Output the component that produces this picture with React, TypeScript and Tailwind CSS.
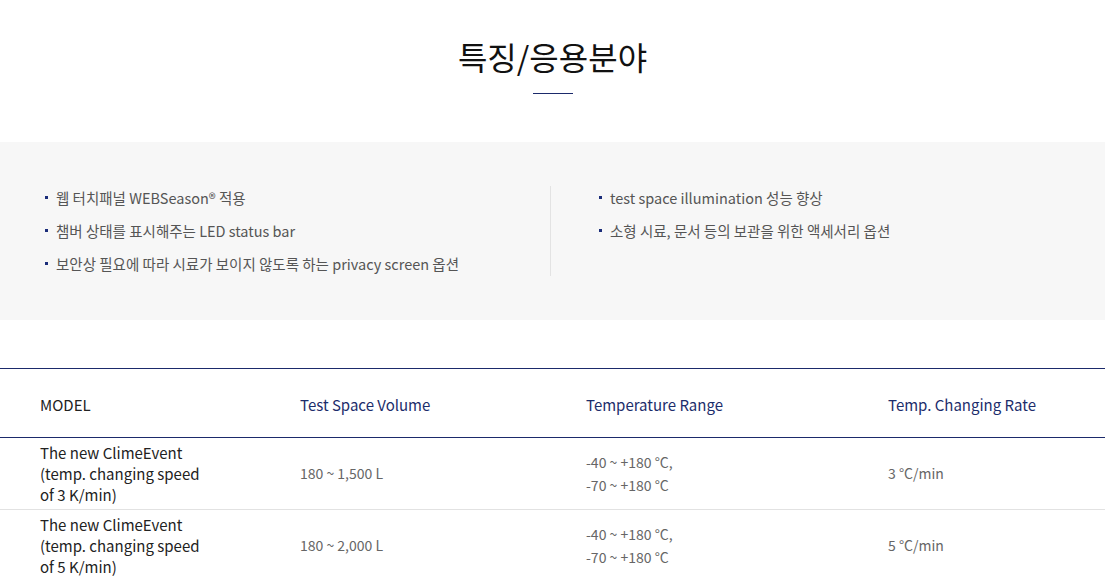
const leftItems = [
  "웹 터치패널 WEBSeason® 적용",
  "챔버 상태를 표시해주는 LED status bar",
  "보안상 필요에 따라 시료가 보이지 않도록 하는 privacy screen 옵션",
];

const rightItems = [
  "test space illumination 성능 향상",
  "소형 시료, 문서 등의 보관을 위한 액세서리 옵션",
];

const rows = [
  { model: ["The new ClimeEvent", "(temp. changing speed", "of 3 K/min)"], volume: "180 ~ 1,500 L", rate: "3 °C/min" },
  { model: ["The new ClimeEvent", "(temp. changing speed", "of 5 K/min)"], volume: "180 ~ 2,000 L", rate: "5 °C/min" },
];

function Bullet({ text }: { text: string }) {
  return (
    <li className="flex items-center h-6 text-[14.5px] text-[#555]">
      <span className="w-[3px] h-[3px] bg-[#1b2d7a] mr-2 shrink-0 -translate-y-[1px]" />
      {text}
    </li>
  );
}

export default function App() {
  return (
    <div
      className="w-[1105px] bg-white text-[#222]"
      style={{ fontFamily: '"Noto Sans CJK KR", "Noto Sans", sans-serif' }}
    >
      <div className="flex flex-col items-center pt-[35px] h-[142px]">
        <h1 className="text-[32px] leading-[42px] font-normal text-[#111]">특징/응용분야</h1>
        <div className="w-10 h-px bg-[#1b2a6b] mt-[16px]" />
      </div>

      <section className="bg-[#f7f7f7] px-[45px] py-[44px]">
        <div className="flex">
          <ul className="w-[506px] flex flex-col gap-[9px] border-r border-[#e3e3e3]">
            {leftItems.map((t) => (
              <Bullet key={t} text={t} />
            ))}
          </ul>
          <ul className="flex-1 pl-12 flex flex-col gap-[9px]">
            {rightItems.map((t) => (
              <Bullet key={t} text={t} />
            ))}
          </ul>
        </div>
      </section>

      <div className="mt-[48px] border-t border-[#1b2a6b]">
        <div className="grid grid-cols-[260px_286px_302px_1fr] pl-10 h-[69px] pt-[4px] items-center border-b border-[#1b2a6b] text-[15px]">
          <div className="text-[#222]">MODEL</div>
          <div className="text-[#1c2d6b]">Test Space Volume</div>
          <div className="text-[#1c2d6b]">Temperature Range</div>
          <div className="text-[#1c2d6b]">Temp. Changing Rate</div>
        </div>
        {rows.map((r, i) => (
          <div
            key={i}
            className="grid grid-cols-[260px_286px_302px_1fr] pl-10 h-[72px] items-center border-b border-[#e2e2e2]"
          >
            <div className="text-[15px] leading-[21px] text-[#222]">
              {r.model.map((l) => (
                <div key={l}>{l}</div>
              ))}
            </div>
            <div className="text-[14px] text-[#666]">{r.volume}</div>
            <div className="text-[14px] leading-[23px] text-[#666]">
              <div>-40 ~ +180 °C,</div>
              <div>-70 ~ +180 °C</div>
            </div>
            <div className="text-[14px] text-[#666]">{r.rate}</div>
          </div>
        ))}
      </div>
    </div>
  );
}
